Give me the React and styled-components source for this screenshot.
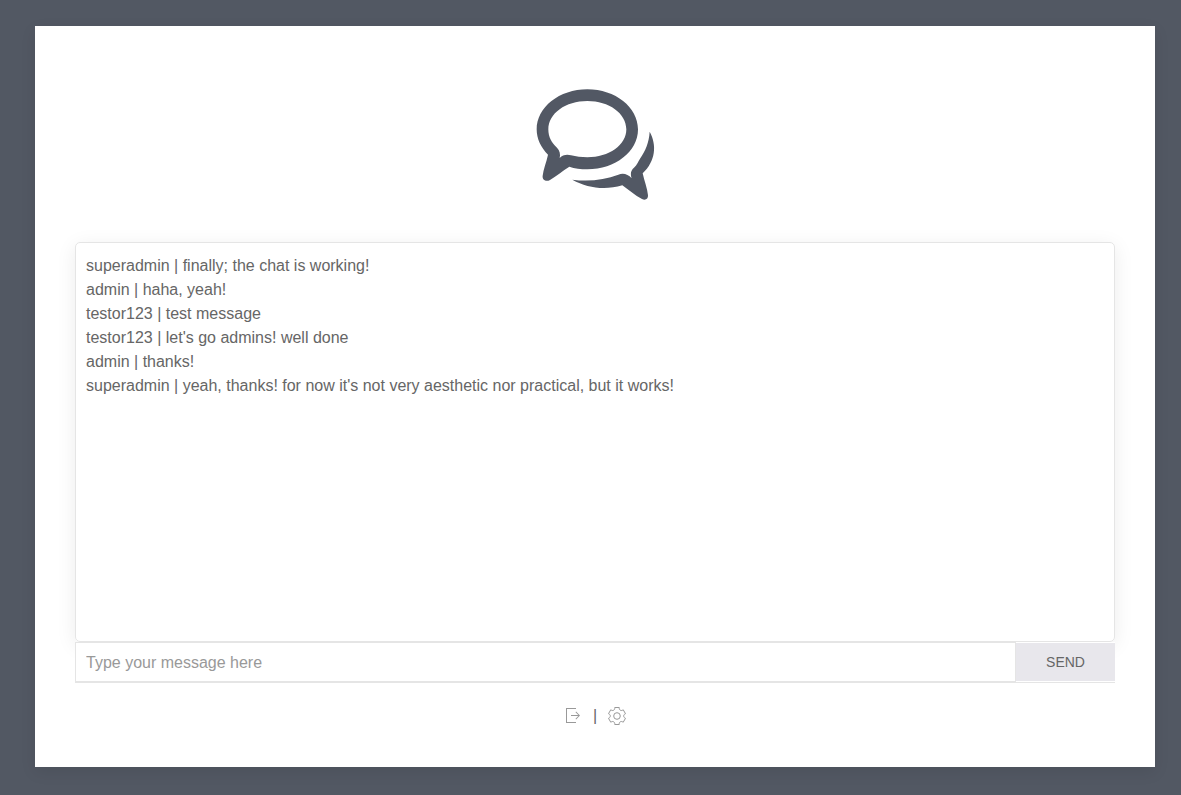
import React, { useState } from "react";
import styled, { createGlobalStyle } from "styled-components";

const GlobalStyle = createGlobalStyle`
  *, *::before, *::after { box-sizing: border-box; }
  body {
    margin: 0;
    background: #525863;
    color: #666;
    font: 16px/24px "Liberation Sans", Arial, sans-serif;
  }
`;

const Page = styled.div`
  min-height: 100vh;
  padding: 26px 26px 28px 35px;
`;

const Card = styled.main`
  padding: 40px 40px 39px;
  background: #fff;
  box-shadow: 0 5px 15px rgba(0, 0, 0, 0.08);
`;

const Brand = styled.header`
  display: flex;
  justify-content: center;
  padding: 10px 0 30px;
`;

const Logo = styled.svg`
  width: 150px;
  height: 136px;
  fill: #525864;
`;

const Messages = styled.ul`
  height: 400px;
  margin: 0;
  padding: 11px 10px;
  overflow-y: auto;
  list-style: none;
  border: 1px solid #e5e5e5;
  border-radius: 5px;
  box-shadow: 0 4px 20px rgba(0, 0, 0, 0.08);
`;

const Composer = styled.form`
  position: relative;
  display: flex;
  align-items: flex-start;
  height: 41px;
  background: #fff;
  border-bottom: 1px solid #e5e5e5;
`;

const MessageInput = styled.input`
  flex: 1;
  min-width: 0;
  height: 40px;
  padding: 1px 10px 0;
  border: 1px solid #e5e5e5;
  border-radius: 0;
  background: #fff;
  color: #666;
  font: inherit;
  outline: none;

  &::placeholder { color: #999; opacity: 1; }
`;

const SendButton = styled.button`
  width: 99px;
  height: 38px;
  margin-top: 1px;
  padding: 0;
  border: 0;
  background: #e8e7ec;
  color: #666;
  font: inherit;
  font-size: 14px;
  line-height: 38px;
  text-transform: uppercase;
  cursor: pointer;
`;

const Actions = styled.nav`
  display: flex;
  justify-content: center;
  align-items: center;
  gap: 10px;
  margin-top: 21px;
`;

const IconLink = styled.a`
  display: flex;
  color: #999;

  svg {
    width: 20px;
    height: 20px;
  }
`;

const messages = [
  ["superadmin", "finally; the chat is working!"],
  ["admin", "haha, yeah!"],
  ["testor123", "test message"],
  ["testor123", "let's go admins! well done"],
  ["admin", "thanks!"],
  ["superadmin", "yeah, thanks! for now it's not very aesthetic nor practical, but it works!"],
];

export default function App() {
  const [draft, setDraft] = useState("");

  return (
    <Page>
      <GlobalStyle />
      <Card>
        <Brand>
          <Logo viewBox="0 0 450 408" role="img" aria-label="Chat">
            <path
              fillRule="evenodd"
              d="M202 40 C286 40 354 94 354 160 C354 227 286 280 202 280 C182 280 164 278 148 272 C127 285 111 299 90 312 C78 319 66 311 68 299 C70 280 79 259 84 236 C63 215 50 189 50 160 C50 94 118 40 202 40 Z M202 75 C137 75 85 112 85 160 C85 183 95 201 111 215 C119 223 122 234 119 246 C128 237 140 234 153 238 C168 242 184 244 202 244 C267 244 319 207 319 160 C319 112 267 75 202 75 Z"
            />
            <path d="M389 167 C411 207 407 255 368 292 C373 315 382 337 384 358 C385 369 376 374 366 369 C344 358 328 343 307 328 C254 343 202 336 157 311 C208 318 254 311 295 296 C309 290 324 294 335 307 C331 292 332 284 342 275 C352 266 354 257 360 248 C376 225 387 200 389 167 Z" />
          </Logo>
        </Brand>

        <Messages aria-label="Messages">
          {messages.map(([user, text], i) => (
            <li key={i}>{user} | {text}</li>
          ))}
        </Messages>

        <Composer onSubmit={(e) => { e.preventDefault(); setDraft(""); }}>
          <MessageInput
            type="text"
            aria-label="Message"
            placeholder="Type your message here"
            value={draft}
            onChange={(e) => setDraft(e.target.value)}
          />
          <SendButton type="submit">Send</SendButton>
        </Composer>

        <Actions aria-label="Account">
          <IconLink href="#logout" aria-label="Log out">
            <svg viewBox="0 0 20 20" fill="currentColor" aria-hidden="true">
              <polygon points="13.1 13.4 12.5 12.8 15.28 10 8 10 8 9 15.28 9 12.5 6.2 13.1 5.62 17 9.5 13.1 13.4" />
              <polygon points="13 2 3 2 3 17 13 17 13 16 4 16 4 3 13 3 13 2" />
            </svg>
          </IconLink>
          <span>|</span>
          <IconLink href="#settings" aria-label="Settings">
            <svg viewBox="0 0 20 20" fill="none" stroke="currentColor" aria-hidden="true">
              <circle cx="9.997" cy="10" r="3.31" />
              <path d="M18.488,12.285 L16.205,16.237 C15.322,15.496 14.185,15.281 13.303,15.791 C12.428,16.289 12.047,17.373 12.246,18.5 L7.735,18.5 C7.938,17.374 7.553,16.299 6.684,15.791 C5.801,15.27 4.655,15.492 3.773,16.237 L1.5,12.285 C2.573,11.871 3.317,10.999 3.317,9.991 C3.305,8.98 2.573,8.121 1.5,7.716 L3.765,3.784 C4.645,4.516 5.794,4.738 6.687,4.232 C7.555,3.722 7.939,2.637 7.735,1.5 L12.263,1.5 C12.072,2.637 12.441,3.71 13.314,4.22 C14.206,4.73 15.343,4.516 16.225,3.794 L18.487,7.714 C17.404,8.117 16.661,8.988 16.67,10.009 C16.672,11.018 17.415,11.88 18.488,12.285 Z" />
            </svg>
          </IconLink>
        </Actions>
      </Card>
    </Page>
  );
}
